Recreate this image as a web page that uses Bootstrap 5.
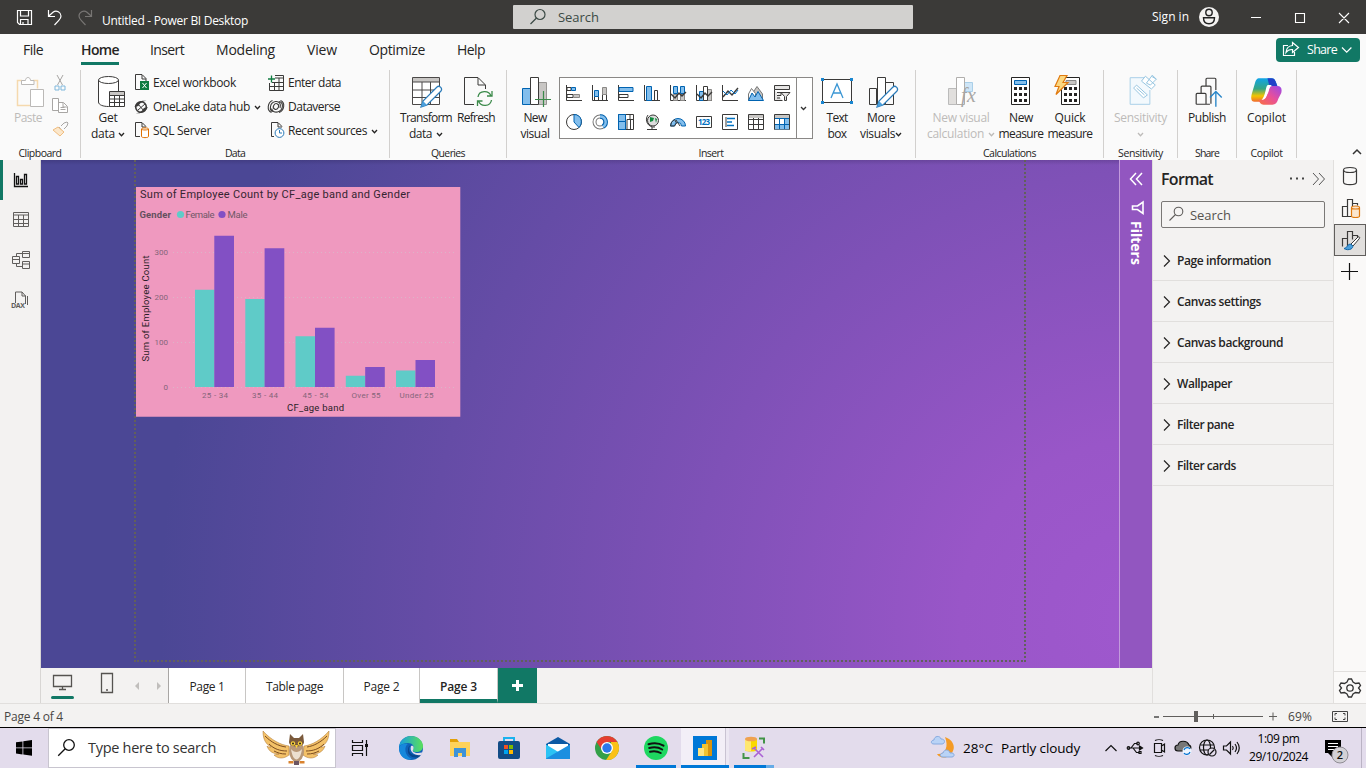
<!DOCTYPE html>
<html lang="en">
<head>
<meta charset="utf-8">
<meta name="viewport" content="width=device-width, initial-scale=1">
<title>Untitled - Power BI Desktop</title>
<link rel="stylesheet" href="https://cdn.jsdelivr.net/npm/bootstrap@5.3.0/dist/css/bootstrap.min.css">
<style>
body{width:1366px;height:768px;overflow:hidden;font-family:"Open Sans","Noto Sans",sans-serif;font-size:12px;line-height:16px;color:#252423;background:#f3f2f1}
svg{display:block;flex:none;overflow:visible;fill:none}
[data-w]{display:inline-block;white-space:nowrap}
.titlebar{display:grid;grid-template-columns:102px 411px 400px 239px 1fr;height:34px;background:#3b3a38;color:#fff}
.titlebar .findbox{height:24px;margin-top:5px;background:#d2d1cf;color:#3b4a45;font-size:13px;border-radius:1px}
.ribbon{height:126px;background:#fafafa}
.tabsrow{height:36px;padding-left:23px;font-size:14px}
.tabsrow .tab{height:31px;line-height:32px;margin-right:32px}
.tabsrow .tab.on{font-weight:600;border-bottom:3px solid #117865;margin-left:6px;margin-right:31px}
.sharebtn{width:84px;height:24px;margin:0 6px 0 auto;background:#117865;color:#fff;border-radius:4px;font-size:12.5px}
.groups{display:grid;grid-template-columns:81px 309px 117px 409px 188px 74px 59px 60px 1fr;height:90px}
.grp{position:relative;border-right:1px solid #d2d0ce;height:88px}
.grplabel{height:15px;line-height:15px;font-size:10.5px;text-align:center}
.tools{height:76px;padding-top:3px}
.big{height:73px;text-align:center;flex:none}
.big svg{height:37px;width:100%;padding-bottom:1px}
.big .off,.off{color:#bdbbb9}
.b-paste{width:56px}.b-get{width:52px;margin-left:1px}.b-tr{width:58px;margin-left:7px}.b-rf{width:42px}
.b-nv{width:48px;margin-left:4px}.b-tb{width:44px;margin-left:2px}.b-mv{width:46px;margin-left:-1px}
.b-nvc{width:80px;margin-left:5px}.b-nm{width:46px;margin-left:-3px}.b-qm{width:52px}
.datarows{margin-top:-2px}
.datarows.second{padding-left:3px}
.rowitem{height:24px;display:flex;align-items:center}
.rowitem svg{margin-right:3px}
.gallery{width:254px;height:62px;margin-top:4px;border:1px solid #8a8886;background:#fff}
.rail{width:41px;border-right:1px solid #d8d6d4;background:#f3f2f1}
.mainrow{height:543px}
.canvas{height:508px;background:linear-gradient(rgba(20,10,40,.16),transparent 5px),radial-gradient(circle 980px at 1099px 460px,#9f58ce 0,#9956c8 180px,#4b4795 100%);overflow:hidden}
.pagebox{width:892px;height:502px;margin-left:93px;border:2px dotted #62605c;border-top:0;padding:27px 0 0 0}
.agechart{font-family:Roboto,sans-serif}
.filters{width:33px;margin-left:auto;background:#9256c0;border-left:1px solid #c39bdc;color:#fff}
.filters .vlabel{writing-mode:vertical-rl;font-size:14px;font-weight:700;line-height:16px}
.pagetabs{height:35px;background:#f3f2f1}
.pagetabs .pg{background:#fff;border-right:1px solid #c8c6c4;text-align:center;line-height:37px;height:35px}
.pg1{width:77px}.pg2{width:98px}.pg3{width:76px}.pg4{width:78px;font-weight:600;border-bottom:4px solid #117865}
.addpg{width:39px;background:#117865}
.formatpane{width:181px;border-left:1px solid #e1dfdd;background:#f3f2f1}
.fhead{height:41px;padding-bottom:3px}
.fsearch{width:164px;height:27px;margin:0 0 12px 8px;border:1px solid #7a7876;border-radius:2px;font-size:13px;color:#55534f;background:#f5f4f3}
.fitem{height:41px;border-bottom:1px solid #e1dfdd;font-weight:600;padding-left:10px;padding-top:1px}
.fitem svg{margin-right:6px}
.strip{width:33px;border-left:1px solid #e1dfdd;background:#faf9f8}
.strip .cell{height:32px;width:32px}
.strip .cell.on{background:#e1dfdd;border:1px solid #605e5c}
.strip .gear{height:32px;border-top:1px solid #e1dfdd}
.status{height:25px;border-top:1px solid #e1dfdd;border-bottom:1px solid #000;color:#484644;background:#f3f2f1;padding-top:2px}
.taskbar{height:40px;display:grid;grid-template-columns:48px 288px 50px repeat(8,49px) 1fr;background:#e3dcec;color:#000}
.taskbar .slot{display:flex;align-items:center;justify-content:center;position:relative}
.tsearch{background:#fff;border:1px solid #c8c5cf;font-size:14.5px;color:#333}
.runbar{position:absolute;bottom:0;height:3px;background:#0078d7}
.runbar.split{background:linear-gradient(90deg,#0078d7 80%,#66abe6 80%)}
.fs13{font-size:13.5px}.clock{line-height:18px;font-size:12px}
.weather{margin-right:7px}.tray{margin-right:9px}
</style>
</head>
<body>
<svg width="0" height="0" class="position-absolute">
<defs>
<symbol id="chev" viewBox="0 0 6 5"><path d="M.5 1 3 3.7 5.5 1" fill="none" stroke="currentColor" stroke-width="1.3"/></symbol>
<symbol id="rchev" viewBox="0 0 8 12"><path d="M1 .5 6.5 6 1 11.5" fill="none" stroke="#252423" stroke-width="1.2"/></symbol>
<symbol id="lens" viewBox="0 0 16 16"><circle cx="10" cy="6" r="4.9" fill="none" stroke="currentColor" stroke-width="1.2"/><path d="M6.5 9.5.7 15.3" stroke="currentColor" stroke-width="1.2"/></symbol>
</defs>
</svg>

<header class="titlebar align-items-center">
 <svg width="102" height="34" viewBox="0 0 102 34" stroke="#fff" stroke-width="1.2"><path d="M17.5 10.5h14v14H19.500l-2-2zM20.500 10.500v5.500h8v-5.500M20.500 24.500v-5h7.500v5M23 22v2.500"/><path d="M48.500 10v6.500H55M48.800 16 53 12.300c3.500-3 8 .2 8 3.700 0 2-.8 3-2.200 4.400L54.500 25"/><path stroke="#777573" d="M91.500 10v6.500H85M91.200 16 87 12.300c-3.500-3-8 .2-8 3.700 0 2 .8 3 2.200 4.400l4.300 4.600"/></svg>
 <div class="pt-1 mt-1"><span data-w="146">Untitled - Power BI Desktop</span></div>
 <div class="findbox d-flex align-items-center align-self-start"><svg width="45" height="24" viewBox="513 5 45 24" stroke="#3b4a45" stroke-width="1.200"><circle cx="540" cy="14.500" r="5"/><path d="m536.500 18-6 6"/></svg><span data-w="41">Search</span></div>
 <div></div>
 <div class="d-flex align-items-center"><span data-w="37">Sign in</span>
 <svg class="ms-auto" width="168" height="34" viewBox="1198 0 168 34"><circle cx="1209" cy="17" r="10" fill="#f3f2f1"/><circle cx="1209" cy="12.500" r="3.200" stroke="#222" stroke-width="1.400"/><path d="M1203.500 17.800h11c0 4-2 6-5.500 6s-5.500-2-5.500-6z" stroke="#222" stroke-width="1.400"/><path d="M1251 17.500h10M1295.500 13.500h9v9h-9zM1339 13l10 10M1349 13l-10 10" stroke="#fff" stroke-width="1.100"/></svg></div>
</header>

<section class="ribbon">
 <nav class="tabsrow d-flex">
  <span class="tab" data-w="20">File</span><span class="tab on" data-w="38">Home</span><span class="tab" data-w="34">Insert</span><span class="tab" data-w="59">Modeling</span><span class="tab" data-w="30">View</span><span class="tab" data-w="56">Optimize</span><span class="tab" data-w="28">Help</span>
  <div class="sharebtn d-flex align-items-center align-self-start mt-1"><svg width="31" height="24" viewBox="1276 38 31 24" stroke="#fff" stroke-width="1.200"><path d="M1288 45.500h-4.500v10h11v-3.500M1292.500 42.500l6 5-6 5v-3c-3-.2-5 .8-6.500 3 .3-4 2.500-6.700 6.500-7z"/></svg><span data-w="30">Share</span><svg class="ms-1" width="12" height="8" viewBox="0 0 12 8"><path d="m1 1.500 4.700 4.700 4.700-4.700" stroke="#fff" stroke-width="1.200"/></svg></div>
 </nav>
 <div class="groups">
  <div class="grp"><div class="tools d-flex">
   <div class="big b-paste"><svg viewBox="0 73 56 36"><path d="M22 80.500h-4.500v25H30M33 80.500h4.500v8" stroke="#f5d9ae" stroke-width="1.500"/><path d="M21.500 80.500h4c0-4 5-4 5 0h3.500v4H21.500z" fill="#fff" stroke="#bbb9b7"/><path d="M30.500 89.500h13v17h-13z" fill="#fff" stroke="#bbb9b7"/></svg><div class="off" data-w="28">Paste</div></div>
   <svg width="22" height="72" viewBox="56 73 22 72"><g stroke="#a8a6a4"><path d="m57 75 5.500 10M63 75l-5.500 10"/><path stroke="#7fb7dc" d="M55 86h4v4h-4zM61 86h4v4h-4z"/><path d="M52.500 98.500h6v12h-6zM58.500 102.500h5l4 4v6h-9zM63 103v4h4M60.500 107.500h4M60.500 109.500h5" fill="#fff"/><path d="m59 127 4 5M61 126l3-3 3-1 1 1-1 3-3 3"/></g><path d="m58 127-5 3 7 6 4-4z" fill="#fbe7cb" stroke="#f0bd80"/></svg>
  </div><div class="grplabel"><span data-w="43">Clipboard</span></div></div>
  <div class="grp"><div class="tools d-flex">
   <div class="big b-get"><svg viewBox="82 73 52 36"><g stroke="#3b3a39" fill="#fff"><path d="M98.500 80v22c0 3 5 4.500 10 4.500s10-1 10-4V80"/><ellipse cx="108.500" cy="80" rx="10" ry="3.500"/><path d="M109.500 91.500h15v15h-15z"/></g><path d="M110 92h14v3h-14z" fill="#c8c6c4"/><path d="M110 95.500h14M110 99h14M110 102.500h14M114.500 95v11M119.500 95v11" stroke="#3b3a39"/></svg><span data-w="19">Get</span><br><span data-w="24">data</span> <svg class="d-inline p-0" style="width:7px;height:5px"><use href="#chev"/></svg></div>
   <div class="datarows"><div class="rowitem"><svg width="16" height="18" viewBox="134 74 16 18"><path d="M140 89.500h-4.500v-15h6.500l4 4v3M142 75v4h4" stroke="#3b3a39"/><path d="M140 81h9v9h-9z" fill="#107c41"/><path d="m142.500 83 4 5M146.500 83l-4 5" stroke="#fff"/></svg><span data-w="83">Excel workbook</span></div>
   <div class="rowitem"><svg width="16" height="16" viewBox="134 99 16 16"><circle cx="141" cy="107" r="5.300" stroke="#3b3a39" stroke-width="1.600"/><path d="M134.500 107c2-5 7-7 12-6-3 0-7 2-8 5zM147.800 107c-2 5-7 7-12 6 3 0 7-2 8-5z" fill="#3b3a39"/><path d="m138 104 6 7M145 104l-7 6" stroke="#3b3a39"/></svg><span data-w="97">OneLake data hub</span><svg class="ms-1" width="7" height="5"><use href="#chev"/></svg></div>
   <div class="rowitem"><svg width="16" height="18" viewBox="134 122 16 18"><path d="M140 136.500h-4.500v-14h6.500l4 4M142 123v4h4" stroke="#3b3a39"/><path d="M141.500 129v7.500c0 1.500 7 1.500 7 0V129c0-1.500-7-1.500-7 0 0 1.300 7 1.300 7 0" fill="#fff" stroke="#e07000"/></svg><span data-w="58">SQL Server</span></div></div>
   <div class="second datarows"><div class="rowitem"><svg width="18" height="17" viewBox="267 74 18 17"><path d="M269.500 82v7.500h14v-15H275M275 77h8M272 81.500h11M270 85.500h13M274.500 82v7M279 77v12" stroke="#3b3a39"/><path d="M268 78h7M271.500 74.500v7" stroke="#107c41" stroke-width="1.300"/></svg><span data-w="53">Enter data</span></div>
   <div class="rowitem"><svg width="18" height="16" viewBox="267 99 18 16"><g stroke="#3b3a39" stroke-width="1.100"><ellipse cx="276" cy="106.500" rx="2.500" ry="3" transform="rotate(30 276 106.500)"/><path d="M273 111.500c-4-1-3.500-9 2.500-10 4-.5 6 3 4.500 6.500M279 101.500c5 1 4.500 9-1.500 10.500-3 .6-5.500-1-5.800-3.500M271.500 112.500c-5-2-4-10 1-12M280.500 100.500c5 2 4 10-1.500 12"/></g></svg><span data-w="52">Dataverse</span></div>
   <div class="rowitem"><svg width="18" height="18" viewBox="267 122 18 18"><path d="M274 136.500h-2.500v-14h6.500l4 4M278 123v4h4" stroke="#3b3a39"/><circle cx="279.500" cy="133" r="4.400" fill="#fff" stroke="#2a7ab8"/><path d="M279.500 130v3h2.500" stroke="#2a7ab8"/></svg><span data-w="79">Recent sources</span><svg class="ms-1" width="7" height="5"><use href="#chev"/></svg></div></div>
  </div><div class="grplabel"><span data-w="20">Data</span></div></div>
  <div class="grp"><div class="tools d-flex">
   <div class="big b-tr"><svg viewBox="397 73 58 36"><path d="M412.500 77.500h27v27h-27z" fill="#fff"/><path d="M413 78h26v4h-26z" fill="#c8c6c4"/><path d="M412.500 77.500h27v27h-27zM413 82h26M413 90h26M413 97.500h26M422 82v22M430.500 82v22" stroke="#4b4948"/><path d="m421 107 2-6 14-14c2-2 6 1 4 4l-14 14z" fill="#fff" stroke="#2a7ab8" stroke-width="1.200"/><path d="m421 107 2-6 4 4z" fill="#4a9fdc"/></svg><span data-w="52">Transform</span><br><span data-w="23">data</span><svg class="d-inline p-0 ms-1" style="width:7px;height:5px"><use href="#chev"/></svg></div>
   <div class="big b-rf"><svg viewBox="455 73 42 36"><path d="M474 104.500h-9.500v-27H478l7.500 7.500v4M478 78v7h7" stroke="#3b3a39"/><path d="M478 97c1-7 11-7 13-1M492 91v5h-5M491.500 100c-1 7-11 7-13 1M477.500 106v-5h5" stroke="#3b8a4a" stroke-width="1.300"/></svg><span data-w="38">Refresh</span></div>
  </div><div class="grplabel"><span data-w="34">Queries</span></div></div>
  <div class="grp"><div class="tools d-flex">
   <div class="big b-nv"><svg viewBox="511 73 48 36"><path d="M522.500 88.500h8v16h-8z" fill="#83beec" stroke="#0063b1"/><path d="M538.500 82.500h8v22h-8z" fill="#c8c6c4" stroke="#979593"/><path d="M530.500 77.500h8v27h-8z" fill="#fff" stroke="#3b3a39"/><path d="M535 99.500h16M543.500 91v16" stroke="#3b8a4a" stroke-width="1.200"/></svg><span data-w="23">New</span><br><span data-w="29">visual</span></div>
   <svg class="gallery" viewBox="560 78 252 60"><path d="M796.500 78v60" stroke="#8a8886"/><path d="m801 107 2.500 2.500L806 107" stroke="#333" stroke-width="1.300"/>
    <g stroke="#3b3a39"><path d="M566.500 85v15.500H582M592.500 85v15.500H608M618.500 85v15.500H634M644.500 85v15.500H660M670.500 85v15.500H686M696.500 85v15.500H712M722.500 85v15.500H738"/>
    <path d="M567 87.500h4v3h-4zM567 94.500h6v3h-6zM654.500 90.500h3v10h-3zM594.500 96.500h4v4h-4zM602.500 94.500h4v6h-4zM619 94.500h9v3h-9z"/>
    <path fill="#83beec" stroke="#0063b1" d="M571.500 87.500h4v3h-4zM594.500 90.500h4v6h-4zM619 87.500h14v4h-14zM646.500 86.500h5v14h-5zM680.500 86.500h4v7h-4zM673.500 86.500h4v7h-4zM699.500 91.500h4v9h-4z"/>
    <path fill="#c8c6c4" stroke="#8a8886" d="M573.500 94.500h6v3h-6zM602.500 87.500h4v7h-4zM673.500 94.500h4v6h-4zM680.500 94.500h4v6h-4zM707.500 89.500h4v11h-4z"/>
    <path fill="#fff" d="M703.500 86.500h4v14h-4z"/>
    <path d="m671 94 4 4 4-5 3 3 4-4M697 94l4 4 4-5 3 3 4-4M723 97l5-6 4 4 6-7" stroke-width="1.400"/><path stroke="#0a73c4" d="m723 91 4 4 4-5 4 4 3-4"/>
    <path d="m752 94 5-7.500 5.500 7.500v6z" fill="#c8c6c4" stroke="#777"/><path d="m748.500 94 3-5.500 4 5 0 7h-7z" fill="#fff" stroke="#777"/><path d="m748.500 100.500 3.500-7.500 3 4 3-5.500 5.500 9z" fill="#83beec" stroke="#0063b1"/>
    <path d="M774.500 89.500v11h8M774.500 85.500h15v4h-15zM777 92.500h4v3h-4M777 98h3M781 92.500h9l-3.500 4v4h-2v-4z" fill="#e6e5e4"/>
    <circle cx="574" cy="122" r="7.500" fill="#fff"/><path d="M574 114.500v7.500l5 5.500c4-4 3-13-5-13z" fill="#83beec" stroke="#0063b1"/>
    <circle cx="600" cy="122" r="5.500" stroke="#777" stroke-width="4"/><circle cx="600" cy="122" r="5.500" stroke="#fff" stroke-width="2"/><path d="M600 116.500a5.500 5.500 0 0 1 3 10.200" stroke="#0063b1" stroke-width="4.500"/><path d="M600 116.500a5.500 5.500 0 0 1 3 10.200" stroke="#83beec" stroke-width="2.500"/>
    <path d="M618.500 114.500h15v15h-15zM627 119.500h6.500M627 119.500v10M630 114.500v5M630.500 120v9" fill="#fff"/><path d="M618.500 114.500h7v7h-7zM618.500 121.500h7v8h-7z" fill="#83beec" stroke="#0063b1"/>
    <circle cx="653" cy="120.500" r="5.500" fill="#ddd"/><path d="m650 117 4 1-1 3-3 1zM655 118l2 1-1 4z" fill="#10893e" stroke="none"/><path d="M648 115c-4 5 0 13 7 12M647 129.500h10M652 127v2"/>
    <path d="M670.500 126a7.500 7.500 0 0 1 15 0h-4a3.500 3.500 0 0 0-7 0z" fill="#83beec" stroke="#0063b1"/><path d="M670.500 126a7.500 7.500 0 0 1 4-6.500l2 3.500-2 3zM676 120l4 6"/>
    <path d="M696.500 116.500h15v11h-15z"/><path d="M722.500 114.500h15v15h-15z"/><path d="M726 117v10M748.500 114.500h15v15h-15zM749 119.500h14M749 124.500h14M753.500 118v11M758.500 118v11M774.500 114.500h15v15h-15z"/></g>
    <text x="698" y="125" font-size="8" font-weight="700" textLength="12" fill="#0070c0">123</text><path d="M727 118.500h8M727 122h5M727 125.500h7" stroke="#0070c0" stroke-width="1.500"/><path d="M749 115h14v3h-14zM775 115h14v3h-14z" fill="#c8c6c4"/><path d="M775 124.500h14v5h-14zM784 118h5v11h-5z" fill="#83beec"/><path d="M775 118.500h14M775 124.500h14M779.500 118v11M784.500 118v11" stroke="#0063b1"/></svg>
   <div class="big b-tb"><svg viewBox="815 73 44 36"><path d="M822.500 79.500h29v23h-29z" fill="#fff" stroke="#3b3a39"/><path d="M821 78h3v3h-3zM850 78h3v3h-3zM821 101h3v3h-3zM850 101h3v3h-3z" fill="#1a86d0"/><path d="m831 98 6-14 6 14M833 93h8" stroke="#3a96d4" stroke-width="1.300"/></svg><span data-w="21">Text</span><br><span data-w="19">box</span></div>
   <div class="big b-mv"><svg viewBox="858 73 46 36"><path d="M869.500 88.500h7v16h-7zM885.500 82.500h8v22h-8z" stroke="#3b3a39"/><path d="M877.500 77.500h8v27h-8z" fill="#fff" stroke="#3b3a39"/><path d="m877 107 2-6 14-14c2-2 6 1 4 4l-14 14z" fill="#fff" stroke="#2a7ab8" stroke-width="1.200"/><path d="m877 107 2-6 4 4z" fill="#4a9fdc"/></svg><span data-w="28">More</span><br><span data-w="35">visuals</span><svg class="d-inline p-0" style="width:7px;height:5px"><use href="#chev"/></svg></div>
  </div><div class="grplabel"><span data-w="25">Insert</span></div></div>
  <div class="grp"><div class="tools d-flex">
   <div class="big b-nvc off"><svg viewBox="921 73 80 36"><path d="M948.500 88.500h8v16h-8z" fill="#e1dfdd" stroke="#bbb"/><path d="M964.500 82.500h8v9h-8z" fill="#cfe6f7" stroke="#a9cfe8"/><path d="M956.500 77.500h8v27h-8z" fill="#fff" stroke="#b0aeac"/><text x="961" y="102" font-family="Liberation Serif" font-style="italic" font-size="20" textLength="15" fill="#a8a6a4">fx</text></svg><span data-w="57">New visual</span><br><span data-w="57">calculation</span><svg class="d-inline p-0 ms-1" style="width:7px;height:5px"><use href="#chev"/></svg></div>
   <div class="big b-nm"><svg viewBox="998 73 46 36"><path d="M1011.500 77.500h18v27h-18z" fill="#fff" stroke="#252423"/><path d="M1014.500 80.500h12v4h-12z" fill="#83beec" stroke="#0063b1"/><path d="M1014 88.500h14M1014 94.500h14M1014 100.500h14" stroke="#252423" stroke-width="3" stroke-dasharray="3 2"/></svg><span data-w="24">New</span><br><span data-w="45">measure</span></div>
   <div class="big b-qm"><svg viewBox="1044 73 52 36"><path d="M1061.500 77.500h18v27h-18z" fill="#fff" stroke="#252423"/><path d="M1066 80.500h10v4h-10z" fill="#c8c6c4" stroke="#888"/><path d="M1064 88.500h14M1064 94.500h14M1064 100.500h14" stroke="#252423" stroke-width="3" stroke-dasharray="3 2"/><path d="M1060 75.500h7l-4 7h5l-12 12 3-8h-4z" fill="#fbd780" stroke="#e07a10" stroke-width="1.200"/></svg><span data-w="31">Quick</span><br><span data-w="45">measure</span></div>
  </div><div class="grplabel"><span data-w="53">Calculations</span></div></div>
  <div class="grp"><div class="tools"><div class="big off"><svg viewBox="1104 73 74 36"><path d="M1146 77.500h-15.500v27h20V90" stroke="#a9cfe8" fill="#f3f9fd"/><path d="m1134 88 3-3 11 10-4 3zM1137 88l8 7M1142 81l4-5 10 9-4 4zM1147 83l6-8 4 4-6 6zM1152 76l5 3" stroke="#94c4e0" fill="#fff"/></svg><span data-w="53">Sensitivity</span><br><svg class="d-inline p-0" style="width:7px;height:5px"><use href="#chev"/></svg></div></div><div class="grplabel"><span data-w="45">Sensitivity</span></div></div>
  <div class="grp"><div class="tools"><div class="big"><svg viewBox="1178 73 59 36"><path d="M1196.500 104.500h14M1196.500 104.500v-10c0-1 0-1 1-1h8c1 0 1 0 1 1v10M1201.500 93v-6c0-1 0-1 1-1h8c1 0 1 0 1 1v17M1206.500 86v-7c0-1 0-1 1-1h8c1 0 1 0 1 1v11" stroke="#3b3a39" stroke-width="1.200"/><path d="M1216.500 107V91.500M1210.500 97.500l6-6 6 6" stroke="#2a86c8" stroke-width="1.400"/></svg><span data-w="38">Publish</span></div></div><div class="grplabel"><span data-w="24">Share</span></div></div>
  <div class="grp"><div class="tools"><div class="big"><svg viewBox="1237 73 60 36"><defs><linearGradient id="ca" x1="0" y1="0" x2="0" y2="1"><stop stop-color="#10a4e8"/><stop offset=".45" stop-color="#35a684"/><stop offset=".75" stop-color="#f2c500"/><stop offset="1" stop-color="#f06a30"/></linearGradient><linearGradient id="cb" x1="1" y1="0" x2="0" y2="1"><stop stop-color="#9a48e8"/><stop offset=".5" stop-color="#e8509a"/><stop offset="1" stop-color="#fa7040"/></linearGradient></defs><path d="M1260 78h12c3 0 4 2 5 5l1 3h-5c-4 0-5 3-6 7l-2 5c-1 3-3 4-5 4h-5c-4 0-4-4-3-8l3-10c1-4 2-6 5-6z" fill="url(#ca)"/><path d="M1268 78h4c3 0 4 2 5 5l1 3h-6c-3 0-3-5-4-8z" fill="#2142c8"/><path d="M1274 86h4c4 0 5 3 4 7l-3 6c-1 4-3 6-6 6h-9c-3 0-4-2-5-5h3c3 0 4-2 5-4l2-6c1-3 2-4 5-4z" fill="url(#cb)"/><path d="M1269 85h4c-3 1-3 4-4 7l-2 4c-1 3-3 4-5 4 2-2 3-5 4-9 1-4 1-6 3-6z" fill="#fff"/></svg><span data-w="39">Copilot</span></div></div><div class="grplabel"><span data-w="32">Copilot</span></div></div>
  <div class="d-flex justify-content-end align-items-end pb-1"><svg class="me-1 mb-0" width="11" height="8" viewBox="0 0 11 8"><path d="m2 6 4-4 4 4" stroke="#333" stroke-width="1.500"/></svg></div>
 </div>
</section>

<main class="mainrow d-flex">
 <aside class="rail"><svg width="40" height="160" viewBox="0 160 40 160"><path d="M0 160h3v40H0z" fill="#117865"/><path d="M14.500 173v13.500H28M16.500 176.500h2v7.500h-2zM20.500 179.500h2v4.500h-2zM24.500 174.500h2v9.500h-2z" stroke="#111" stroke-width="1.300"/><g stroke="#605e5c"><path d="M13.500 212.500h15v14h-15zM13 215h16M13 219.500h15M13 223.500h15M18.500 215v12M23.500 215v12"/><path d="M12.500 256.500h7v7h-7zM12.500 259.500h7M22.500 251.500h7v6h-7zM22.500 253.500h7M22.500 261.500h7v7h-7zM22.500 264h7M16.500 256v-2.500h6M16.500 264v2.500h6"/><path d="M15.500 303v-11h6.500l3.500 4v8M22 292v4h4M27.500 296v9"/></g><text x="11" y="308" font-size="7" font-weight="700" fill="#605e5c" textLength="14">DAX</text></svg></aside>
 <div class="flex-grow-1">
  <div class="canvas d-flex">
   <div class="pagebox">
    <svg class="agechart" width="325" height="230" viewBox="136 187 325 230">
     <path fill="#ef99bf" d="M136 187h324.300v229.700H136z"/>
     <path d="M173 252.500h284M173 297.500h284M173 342.500h284M173 387.500h284" stroke="#dcb4c8" stroke-dasharray="1 3"/>
     <text x="140" y="198" font-size="11" fill="#352531" textLength="270">Sum of Employee Count by CF_age band and Gender</text>
     <text x="139.500" y="218" font-size="9.500" font-weight="700" fill="#65505e" textLength="31.500">Gender</text>
     <circle cx="180.500" cy="214.500" r="3.600" fill="#5fcbc8"/><circle cx="222" cy="214.500" r="3.600" fill="#8250c4"/>
     <g font-size="9.500" fill="#705867"><text x="185.500" y="218" textLength="29">Female</text><text x="227.500" y="218" textLength="20">Male</text></g>
     <path fill="#5fcbc8" d="M195 289.700h19.500V387H195zM245.300 299h19.500v88h-19.500zM295.500 336.300H315V387h-19.500zM345.800 375.800h19.500V387h-19.500zM396 370.500h19.500V387H396z"/>
     <path fill="#8250c4" d="M214.300 235.800H234V387h-19.700zM264.600 248.200h19.700V387h-19.700zM315 327.700h19.600V387H315zM365.200 367h19.600v20h-19.600zM415.500 360H435v27h-19.500z"/>
     <g font-size="8" fill="#85657a"><g text-anchor="end"><text x="168" y="255">300</text><text x="168" y="300">200</text><text x="168" y="345">100</text><text x="168" y="390">0</text></g>
     <text x="202" y="398" textLength="26">25 - 34</text><text x="252" y="398" textLength="26">35 - 44</text><text x="302.500" y="398" textLength="26">45 - 54</text><text x="351.500" y="398" textLength="29">Over 55</text><text x="399.500" y="398" textLength="34">Under 25</text></g>
     <g font-size="9.500" fill="#2a1e27"><text x="287" y="411" textLength="57">CF_age band</text><text transform="translate(149 361.500) rotate(-90)" textLength="106">Sum of Employee Count</text></g>
    </svg>
   </div>
   <div class="filters"><svg width="32" height="61" viewBox="1120 160 32 61"><path d="m1136 173-5.500 6 5.500 6M1142 173l-5.500 6 5.500 6" stroke="#fff" stroke-width="1.500"/><path d="M1143 202v11.500l-5.500-4h-5v-3.500h5z" stroke="#fff" stroke-width="1.600"/></svg><div class="vlabel ms-2">Filters</div></div>
  </div>
  <div class="pagetabs d-flex">
   <svg width="128" height="35" viewBox="41 668 128 35"><path d="M53.500 675.500h18v11h-18zM62.500 687v2M59 689.500h7M101.500 673.500h11v19h-11zM106 690h2" stroke="#555350" stroke-width="1.300"/><rect x="51" y="696" width="23" height="3" rx="1.500" fill="#117865"/><path d="m139 682-4 4 4 4zM157 682l4 4-4 4z" fill="#c0bebc"/><path d="M168.500 668v35" stroke="#a8a6a4"/></svg>
   <div class="pg pg1"><span data-w="35">Page 1</span></div><div class="pg pg2"><span data-w="57">Table page</span></div><div class="pg pg3"><span data-w="36">Page 2</span></div><div class="pg pg4"><span data-w="37">Page 3</span></div>
   <div class="addpg d-flex align-items-center justify-content-center"><svg width="11" height="11" viewBox="0 0 11 11"><path d="M5.500 0v11M0 5.500h11" stroke="#fff" stroke-width="3"/></svg></div>
  </div>
 </div>
 <aside class="formatpane">
  <div class="fhead d-flex align-items-center ps-2"><span class="fs-6 fw-semibold" data-w="52">Format</span><svg class="ms-auto me-2" width="36" height="14" viewBox="1289 172 36 14"><path d="M1290 178.500h2M1296 178.500h2M1302 178.500h2" stroke="#444" stroke-width="2"/><path d="m1313 173 5.500 6-5.500 6M1319 173l5.500 6-5.500 6" stroke="#555"/></svg></div>
  <div class="fsearch d-flex align-items-center"><svg width="28" height="25" viewBox="1162 202 28 25" stroke="#605e5c" stroke-width="1.100"><circle cx="1178.500" cy="211.500" r="4.300"/><path d="m1175.500 214.500-6 6"/></svg><span data-w="41">Search</span></div>
  <div class="fitem d-flex align-items-center"><svg width="8" height="12"><use href="#rchev"/></svg><span data-w="94">Page information</span></div>
  <div class="fitem d-flex align-items-center"><svg width="8" height="12"><use href="#rchev"/></svg><span data-w="84">Canvas settings</span></div>
  <div class="fitem d-flex align-items-center"><svg width="8" height="12"><use href="#rchev"/></svg><span data-w="106">Canvas background</span></div>
  <div class="fitem d-flex align-items-center"><svg width="8" height="12"><use href="#rchev"/></svg><span data-w="55">Wallpaper</span></div>
  <div class="fitem d-flex align-items-center"><svg width="8" height="12"><use href="#rchev"/></svg><span data-w="57">Filter pane</span></div>
  <div class="fitem d-flex align-items-center"><svg width="8" height="12"><use href="#rchev"/></svg><span data-w="59">Filter cards</span></div>
 </aside>
 <aside class="strip d-flex flex-column">
  <svg class="cell" viewBox="1334 160 32 32" stroke="#3b3a39" stroke-width="1.200"><path d="M1343.500 170v12c0 3.500 13 3.500 13 0v-12"/><ellipse cx="1350" cy="170" rx="6.500" ry="2.500"/></svg>
  <svg class="cell" viewBox="1334 192 32 32"><path d="M1352 216.500h-9.500v-10h5M1347.500 216v-16.500h5v8M1352.500 203.500h5v2" stroke="#3b3a39" stroke-width="1.200"/><path d="M1351.500 207.500v8.500c0 2 8 2 8 0v-8.500c0-2-8-2-8 0s8 2 8 0" fill="#fbe6cf" stroke="#e07a10" stroke-width="1.200"/></svg>
  <svg class="cell on" viewBox="1335 225 30 30"><path d="M1347.500 247v-15.500h5v8M1347 238.500h-4.500v8M1352.500 235.500h5v2" stroke="#3b3a39" stroke-width="1.200"/><path d="m1351 244 7-7c2-1 2 1 1 2l-6 7z" fill="#fff" stroke="#3b3a39"/><path d="M1344 248.500c3 0 3-4 6-4.500 3 1 4 3 1 5-2 1-5 1-7-.500z" fill="#4a9fdc" stroke="#1467a8"/></svg>
  <svg class="cell" viewBox="1334 256 32 32"><path d="M1341 271.500h17M1349.500 263v17" stroke="#111" stroke-width="1.200"/></svg>
  <div class="gear mt-auto d-flex justify-content-center"><svg width="32" height="32" viewBox="1334 672 32 32"><path d="m1347 682 1.500-3h3l1.500 3 2.500 1.500 3.500-.5 1.500 2.500-2 2.500 2 2.500-1.500 2.500-3.500-.5-2.500 1.500-1.500 3h-3l-1.500-3-2.500-1.500-3.500.5-1.500-2.500 2-2.500-2-2.500 1.500-2.500 3.500.5z" stroke="#333" stroke-width="1.300"/><circle cx="1350" cy="688" r="3.200" stroke="#333" stroke-width="1.300"/></svg></div>
 </aside>
</main>

<footer class="status d-flex align-items-center ps-1"><span data-w="59">Page 4 of 4</span><svg class="ms-auto" width="130" height="20" viewBox="1150 706 130 20"><path d="M1154 716h5" stroke="#555" stroke-width="1.600"/><path d="M1163 715.500h100M1213.500 713v5M1269 715.500h8M1273 711.500v8" stroke="#605e5c"/><path d="M1194 710h4v11h-4z" fill="#605e5c"/></svg><span class="ms-2 me-3" data-w="24">69%</span><svg class="me-3" width="22" height="13" viewBox="-4 0 22 13" stroke="#444"><path d="M.5 1.500h15v10H.5zM3 5.500v-2h2M11 3.500h2v2M13 7.500v2h-2M5 9.500H3v-2"/></svg></footer>

<div class="taskbar">
 <div class="slot"><svg width="16" height="16" viewBox="0 0 16 16"><g fill="#000"><path d="m0 2.300 6.500-.9v6.100H0zM7.300 1.300 16 0v7.500H7.300zM0 8.300h6.500v6.100L0 13.600zM7.300 8.300H16v7.500l-8.700-1.200z"/></g></svg></div>
 <div class="tsearch d-flex align-items-center"><svg width="39" height="38" viewBox="50 729 39 38" stroke="#111" stroke-width="1.300"><circle cx="70" cy="745" r="5.300"/><path d="m66.200 748.800-7 7"/></svg><span data-w="128">Type here to search</span>
  <svg class="ms-auto me-1" width="70" height="38" viewBox="261 730 70 38"><g stroke="#a8712c" stroke-width=".5"><path d="M289 747c-8-1-18-6-26-15 0 9 3 13 8 16-2 0-3 0-4-1 2 6 7 8 12 8l-5 1c4 4 10 4 15 0zM304 747c8-1 17-6 25-15 0 9-3 13-8 16 2 0 3 0 4-1-2 6-7 8-12 8l5 1c-4 4-10 4-15 0z" fill="#f3c168"/></g><path d="M287 752c-7 0-13-2-18-7M286 755c-5 0-8-1-12-3M306 752c7 0 13-2 18-7M307 755c5 0 8-1 12-3M265 737c6 6 13 10 21 11M327 737c-6 6-13 10-20 11" stroke="#7c4d22"/><ellipse cx="296.500" cy="752" rx="7.500" ry="11" fill="#b89878"/><path d="m290 735 4 4h5l4-4 1 8c0 6-15 6-15 0z" fill="#7b5a3c"/><path d="M291 750c2 14 9 14 11 0-3 4-8 4-11 0z" fill="#ece0d0"/><g fill="#fbd23c"><circle cx="293" cy="744.500" r="2.200"/><circle cx="300" cy="744.500" r="2.200"/><path d="M295 746h3l-1.500 3.500z"/></g><g fill="#222"><circle cx="293" cy="744.500" r="1"/><circle cx="300" cy="744.500" r="1"/></g><path d="M291 762v2.500M302 762v2.500" stroke="#d9822e" stroke-width="5"/><path d="M294 762h5v4h-5z" fill="#6b5563"/></svg></div>
 <div class="slot"><svg width="18" height="16" viewBox="351 740 18 16"><path d="M351.500 740v2.500h10V740M351.500 756v-2.500h10v2.500M351.500 745.500h10v5h-10zM365.500 740v16" stroke="#111" stroke-width="1.200"/><path d="M364 744h3v3h-3z" fill="#111"/></svg></div>
 <div class="slot"><svg width="24" height="24" viewBox="0 0 24 24"><defs><linearGradient id="ed"><stop stop-color="#169de0"/><stop offset="1" stop-color="#5be05a"/></linearGradient></defs><circle cx="12" cy="12" r="12" fill="#0f62b8"/><path d="M0 11C1 4 6 0 12 0c7 0 12 5 12 10 0 4-3 6-7 6-3 0-4-1-3-3 2-3-1-6-5-6-4 0-7 1-9 4z" fill="url(#ed)"/><path d="M0 12c1-4 5-5 9-4-4 2-4 12 4 15C5 25 0 19 0 12z" fill="#1688dc"/><path d="M12 9c-3 2-3 9 3 10 3 .5 5-.3 7-1 0 0-1 2-2 3-6 2-12-2-11-7 0-3 1-4 3-5z" fill="#0a468c"/><path d="M12 10c3-1 3 2 2 4-1 1 1 3 5 3 3 0 5-1 5-1l-2 3c-6 1-12-3-10-9z" fill="#e3dcec"/></svg></div>
 <div class="slot"><svg width="22" height="20" viewBox="0 0 22 20"><path d="M1 1h7l2 3h11v4H1z" fill="#e3a008"/><path d="M1 4h20v14H1z" fill="#ffd25a"/><path d="M5 10h12v9h-4v-4H9v4H5z" fill="#3f93d8"/></svg></div>
 <div class="slot"><svg width="22" height="24" viewBox="0 0 22 24"><path d="M6 6V2h10v4" stroke="#1bb2ee" stroke-width="2"/><rect y="5" width="22" height="18" rx="2" fill="#124c86"/><path d="M6 9h4v4H6z" fill="#f25022"/><path d="M11 9h4v4h-4z" fill="#7fba00"/><path d="M6 14h4v4H6z" fill="#00a4ef"/><path d="M11 14h4v4h-4z" fill="#ffb900"/></svg></div>
 <div class="slot"><svg width="24" height="24" viewBox="0 0 24 24"><path d="M0 8 12 1l12 7v6H0z" fill="#0c59a4"/><path d="M2 8h20v8H2z" fill="#fff"/><path d="M0 8.500 14 17l-14 6z" fill="#2cc3f4"/><path d="m24 8.500-24 14V23h24z" fill="#1b8fe0"/></svg></div>
 <div class="slot"><svg width="24" height="24" viewBox="0 0 24 24"><circle cx="12" cy="12" r="12" fill="#34a048"/><path d="M1.600 6A12 12 0 0 1 22.400 6H12L7 14z" fill="#e53e30"/><path d="M22.400 6A12 12 0 0 1 11 24l6-9-1-9z" fill="#fbc116"/><circle cx="12" cy="12" r="6" fill="#fff"/><circle cx="12" cy="12" r="4.700" fill="#2b78ea"/></svg></div>
 <div class="slot"><svg width="24" height="24" viewBox="0 0 24 24"><circle cx="12" cy="12" r="12" fill="#1ed760"/><path d="M4.500 8.200c5-1.500 11-1 15 1.500M5.200 12c4.500-1.300 9.500-.7 13 1.500M6 15.700c4-1 7.500-.6 10.700 1.300" stroke="#111" stroke-width="2" stroke-linecap="round"/></svg><div class="runbar" style="width:40px"></div></div>
 <div class="slot" style="background:linear-gradient(90deg,#e3dcec 1px,#f3eff7 1px 45px,#c9c3d2 45px 46px,#ece7f2 46px)"><svg width="24" height="24" viewBox="0 0 24 24"><path fill="#0078d7" d="M0 0h24v24H0z"/><path d="M13 4h6v16h-6z" fill="#d9930d"/><path d="M9 8h6v12H9z" fill="#f3c32f"/><path d="M5 12h6v8H5z" fill="#ffe480"/></svg><div class="runbar end-0" style="width:48px"></div></div>
 <div class="slot"><svg width="24" height="24" viewBox="742 736 24 24"><path d="M745 739v11c0 2 12 2 12 0v-11z" fill="#fbd900"/><path d="M745 739h6v12c-4 0-6 0-6-1z" fill="#ffe770"/><ellipse cx="751" cy="739" rx="6" ry="2.300" fill="#efa250"/><path d="M759 738.500h5v5M743.500 753v5h6" stroke="#429447" stroke-width="2"/><path d="m754 748 9 9M763 748l-9 9M752 749l4-2M761 747l3 3" stroke="#ab62d4" stroke-width="1.600"/></svg><div class="runbar split" style="width:40px"></div></div>
 <div class="d-flex align-items-center justify-content-end">
  <svg width="26" height="24" viewBox="930 736 26 24" class="weather"><path d="M945 737c9 3 12 12 5 18-4 4-11 3-13-1 8 1 12-7 8-17z" fill="#f49b25"/><path d="M934 744c-4 0-3-4 0-4 0-4 6-5 7-1 5 0 4 5 1 5zM943 757c-4 0-3-4 0-4 1-4 6-4 7 0 5-1 5 4 2 4z" fill="#b9d3f6" stroke="#86aae0"/></svg>
  <span class="fs13 me-2" data-w="30">28°C</span><span class="fs13 me-4" data-w="79">Partly cloudy</span>
  <svg width="136" height="24" viewBox="1104 736 136 24" class="tray" stroke="#111" stroke-width="1.200"><path d="m1105.500 751 5.500-5.500 5.500 5.500"/><path d="M1128 748h14M1131 748l3.500-4.500h3M1133 748l3.500 4.500h3"/><circle cx="1128.500" cy="748" r="1.300"/><path d="m1139.500 746 3 2-3 2z" fill="#111"/><circle cx="1138" cy="743.500" r="1.300"/><path d="M1139 751.500h2v2h-2z"/><path d="M1154.500 743.500h7v9h-7zM1161.500 746l3-2v8l-3-2M1155 740.500c2-1 6-1 8 0M1155 755.500c2 1 6 1 8 0"/><path d="M1178 751c-4 0-4-6 0-6 1-5 9-5 11 0 3 1 2 6-1 6z" fill="#777"/><circle cx="1187" cy="751" r="4.500" fill="#eef6ff" stroke="none"/><path d="M1184 750c1-3 5-3 6-1M1190 752c-1 3-5 3-6 1" stroke="#0070d0"/><circle cx="1207" cy="747.500" r="7.500"/><ellipse cx="1207" cy="747.500" rx="3.500" ry="7.500"/><path d="M1200 745h14M1200 750h14"/><circle cx="1212" cy="752" r="4" fill="#e3dcec"/><path d="m1209.500 754.500 5-5M1223.500 746h3l4-4v12l-4-4h-3zM1232.500 746q1.500 2 0 4M1235 744q3 4 0 8M1237 742q4.500 6 0 12"/></svg>
  <div class="text-center clock me-3"><span data-w="42">1:09 pm</span><br><span data-w="59">29/10/2024</span></div>
  <svg width="42" height="40" viewBox="1324 728 42 40"><path d="M1325 740h16v13h-9v4l-4-4h-3z" fill="#000"/><path d="M1328 743.500h10M1328 746.500h10M1328 749.500h7" stroke="#fff"/><circle cx="1340" cy="755" r="8" fill="#d3d1d6" stroke="#908d94"/><text x="1336.800" y="759" font-size="11" font-weight="600" fill="#111">2</text><path d="M1361.500 728v40" stroke="#bab3c4"/></svg>
 </div>
</div>
<script src="https://cdn.jsdelivr.net/npm/bootstrap@5.3.0/dist/js/bootstrap.bundle.min.js"></script>
<script>
document.querySelectorAll('[data-w]').forEach(function (el) {
  var w = el.getBoundingClientRect().width;
  el.style.letterSpacing = ((el.dataset.w - w) / el.textContent.length).toFixed(3) + 'px';
});
</script>
</body>
</html>
